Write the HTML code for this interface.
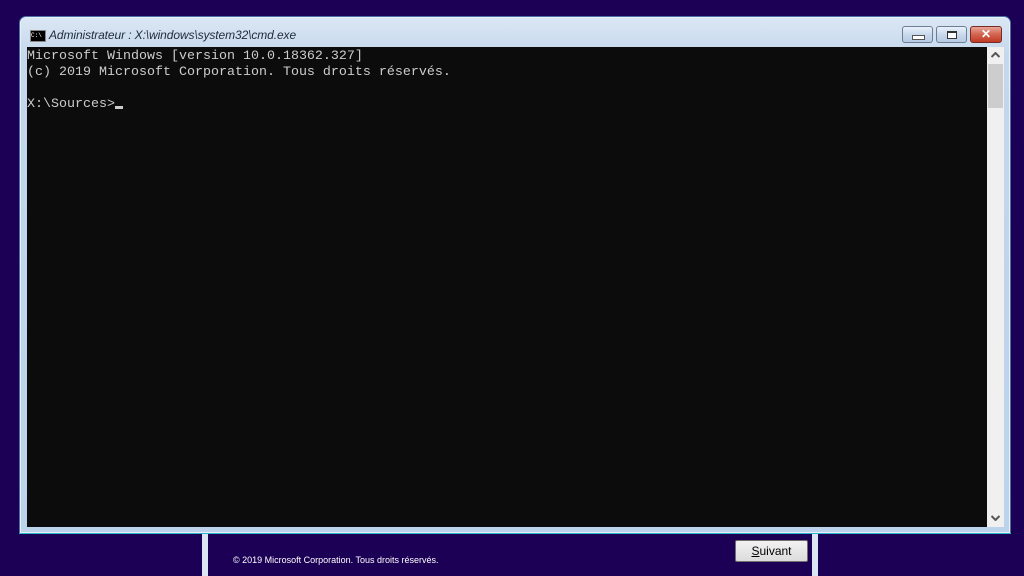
<!DOCTYPE html>
<html><head><meta charset="utf-8"><style>
body{margin:0;width:1024px;height:576px;background:#1b0055;position:relative;overflow:hidden;font-family:"Liberation Sans",sans-serif}
.win{position:absolute;left:19px;top:16px;width:992px;height:518px;background:linear-gradient(#dbe7f4,#c4d7ec 40px,#bcd3eb);border:1px solid #4a6fa0;border-radius:7px 7px 0 0;box-sizing:border-box;box-shadow:inset 0 0 0 1px #e8f1fb}
.title{position:absolute;left:49px;top:28px;font-size:12px;font-style:italic;color:#1e2b3c;letter-spacing:-0.1px}
.ico{position:absolute;left:30px;top:30px;width:14px;height:10px;background:#000;border:1px solid #888;color:#fff;font-size:6px;line-height:10px;font-family:"Liberation Mono",monospace}
.con{position:absolute;left:27px;top:47px;width:960px;height:478px;background:#0c0c0c;color:#cccccc;font-family:"Liberation Mono",monospace;font-size:13.33px;line-height:16px;white-space:pre;padding-top:2px}
.sb{position:absolute;left:987px;top:47px;width:17px;height:480px;background:#f0f0f0}
.thumb{position:absolute;left:988px;top:64px;width:15px;height:44px;background:#cdcdcd}
.btn{position:absolute;top:26px;height:17px;border:1px solid #6d7d94;border-radius:3px;box-sizing:border-box;background:linear-gradient(#e9f1fb,#c9d9ec 50%,#b5cae3)}
.bar{position:absolute;top:534px;width:6px;height:42px;background:#dce6f2}
.sv{position:absolute;left:735px;top:540px;width:73px;height:22px;border:1px solid #707070;border-radius:2px;box-sizing:border-box;background:linear-gradient(#f2f2f2,#dcdcdc);font-size:12px;text-align:center;line-height:20px;color:#000}
</style></head><body>
<div class="win"></div>
<div class="ico">C:\</div>
<div class="title">Administrateur : X:\windows\system32\cmd.exe</div>
<div class="btn" style="left:902px;width:31px"><div style="position:absolute;left:9px;top:8px;width:11px;height:3px;background:#fff;border:1px solid #555"></div></div>
<div class="btn" style="left:936px;width:31px"><div style="position:absolute;left:10px;top:4px;width:8px;height:5px;border:1px solid #333;border-width:2px 1px 1px;background:#fff"></div></div>
<div class="btn" style="left:970px;width:32px;background:linear-gradient(#e9a597,#d2634f 50%,#c03b26);border-color:#7a2a25;color:#fff;font-weight:bold;font-size:12px;text-align:center;line-height:15px">✕</div>
<div class="con">Microsoft Windows [version 10.0.18362.327]
(c) 2019 Microsoft Corporation. Tous droits réservés.

X:\Sources&gt;<span style="display:inline-block;width:8px;height:3px;background:#ccc;vertical-align:-2px"></span></div>
<div class="sb">
<svg style="position:absolute;left:4px;top:5px" width="9" height="6"><path d="M0.5 5 L4.5 1 L8.5 5" stroke="#555" stroke-width="2" fill="none"/></svg>
<svg style="position:absolute;left:4px;top:468px" width="9" height="6"><path d="M0.5 1 L4.5 5 L8.5 1" stroke="#555" stroke-width="2" fill="none"/></svg>
</div>
<div class="thumb"></div>
<div style="position:absolute;left:19px;top:533px;width:992px;height:1px;background:#2fb5c9"></div>
<div class="bar" style="left:202px"></div>
<div class="bar" style="left:812px"></div>
<div style="position:absolute;left:233px;top:555px;font-size:9px;color:#fff">© 2019 Microsoft Corporation. Tous droits réservés.</div>
<div class="sv"><u>S</u>uivant</div>
</body></html>
